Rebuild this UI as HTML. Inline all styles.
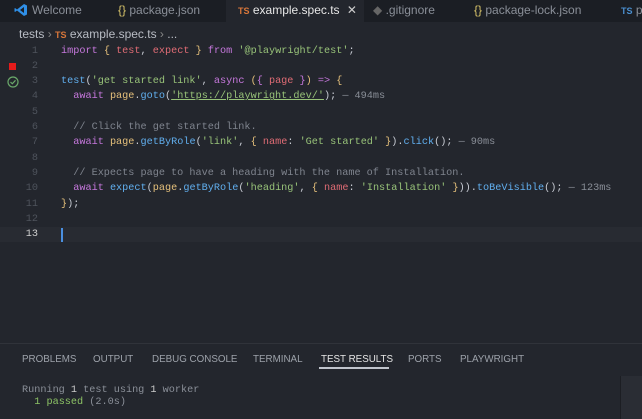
<!DOCTYPE html>
<html><head><style>
*{margin:0;padding:0;box-sizing:border-box}
body{width:642px;height:418px;overflow:hidden;background:#23262d;font-family:"Liberation Sans",sans-serif;position:relative}
.tabs{position:absolute;left:0;top:0;width:642px;height:22px;background:#1b1e24}
.tab{position:absolute;top:0;height:22px;line-height:20px;font-size:12px;color:#8a8f98;white-space:nowrap}
.tab.active{background:#23262d;color:#e6e6e6}
.crumb{position:absolute;left:19px;top:27px;font-size:12px;color:#b8bcc4}
.code{position:absolute;left:0;top:43.5px;width:642px;font-family:"Liberation Mono",monospace;font-size:10.2px}
.ln{position:absolute;left:0;width:642px;height:15.3px;line-height:15.3px;white-space:pre}
.n{position:absolute;left:18px;width:20px;text-align:right;color:#4e535c}
.t{position:absolute;left:61px;color:#c8ccd4}
.k{color:#c678dd}.r{color:#e06c75}.s{color:#98c379}.f{color:#61afef}.y{color:#e5c07b}.c{color:#7f848e}.g{color:#8a8f98}.p{color:#d19a66}
.panel{position:absolute;left:0;top:343px;width:642px;height:75px;border-top:1px solid #30333a}
.pt{position:absolute;top:10px;font-size:9.8px;color:#9da2aa}
</style></head><body>
<div class="tabs">
 <div class="tab" style="left:10px"><svg width="14" height="14" viewBox="0 0 14 14" style="position:absolute;left:4px;top:3px"><path d="M10 1 L13 2.5 V11.5 L10 13 L3 7.5 L1 9 L0.5 8.5 V5.5 L1 5 L3 6.5 Z M10 4 L6 7 L10 10 Z" fill="#2f8fe6"/></svg><span style="position:absolute;left:22px">Welcome</span></div>
 <div class="tab" style="left:118px"><span style="color:#d7c36a">{}</span> package.json</div>
 <div class="tab active" style="left:226px;width:138px;padding-left:12px"><span style="color:#d9773a;font-size:9px;font-weight:bold">TS</span> example.spec.ts <span style="margin-left:4px;color:#ccc">✕</span></div>
 <div class="tab" style="left:373px"><span style="color:#666">◆</span> .gitignore</div>
 <div class="tab" style="left:474px"><span style="color:#d7c36a">{}</span> package-lock.json</div>
 <div class="tab" style="left:621px"><span style="color:#4a8fd0;font-size:9px;font-weight:bold">TS</span> p</div>
</div>
<div class="crumb">tests <span style="color:#888">›</span> <span style="color:#d9773a;font-size:9px;font-weight:bold">TS</span> example.spec.ts <span style="color:#888">›</span> ...</div>
<div class="code">
 <div class="ln" style="top:0"><span class="n">1</span><span class="t"><span class="k">import</span> <span class="y">{</span> <span class="r">test</span>, <span class="r">expect</span> <span class="y">}</span> <span class="k">from</span> <span class="s">'@playwright/test'</span>;</span></div>
 <div class="ln" style="top:15.3px"><div style="position:absolute;left:9px;top:4px;width:7px;height:7px;background:#e51b1b"></div><span class="n">2</span></div>
 <div class="ln" style="top:30.6px"><svg width="12" height="12" style="position:absolute;left:7px;top:2px"><circle cx="6" cy="6" r="5" fill="none" stroke="#6aa86a" stroke-width="1.2"/><path d="M3.5 6 L5.3 7.8 L8.5 4.3" fill="none" stroke="#6aa86a" stroke-width="1.2"/></svg><span class="n">3</span><span class="t"><span class="f">test</span>(<span class="s">'get started link'</span>, <span class="k">async</span> <span class="y">(</span><span class="k">{</span> <span class="r">page</span> <span class="k">}</span><span class="y">)</span> <span class="k">=&gt;</span> <span class="y">{</span></span></div>
 <div class="ln" style="top:45.9px"><span class="n">4</span><span class="t">  <span class="k">await</span> <span class="y">page</span>.<span class="f">goto</span>(<span class="s" style="text-decoration:underline">'https://playwright.dev/'</span>); <span class="g">— 494ms</span></span></div>
 <div class="ln" style="top:61.2px"><span class="n">5</span></div>
 <div class="ln" style="top:76.5px"><span class="n">6</span><span class="t">  <span class="c">// Click the get started link.</span></span></div>
 <div class="ln" style="top:91.8px"><span class="n">7</span><span class="t">  <span class="k">await</span> <span class="y">page</span>.<span class="f">getByRole</span>(<span class="s">'link'</span>, <span class="y">{</span> <span class="r">name</span>: <span class="s">'Get started'</span> <span class="y">}</span>).<span class="f">click</span>(); <span class="g">— 90ms</span></span></div>
 <div class="ln" style="top:107.1px"><span class="n">8</span></div>
 <div class="ln" style="top:122.4px"><span class="n">9</span><span class="t">  <span class="c">// Expects page to have a heading with the name of Installation.</span></span></div>
 <div class="ln" style="top:137.7px"><span class="n">10</span><span class="t">  <span class="k">await</span> <span class="f">expect</span>(<span class="y">page</span>.<span class="f">getByRole</span>(<span class="s">'heading'</span>, <span class="y">{</span> <span class="r">name</span>: <span class="s">'Installation'</span> <span class="y">}</span>)).<span class="f">toBeVisible</span>(); <span class="g">— 123ms</span></span></div>
 <div class="ln" style="top:153px"><span class="n">11</span><span class="t"><span class="y">}</span>);</span></div>
 <div class="ln" style="top:168.3px"><span class="n">12</span></div>
 <div class="ln" style="top:183.6px;background:#282b32"><span class="n" style="color:#d0d0d0">13</span><div style="position:absolute;left:61px;top:1px;width:2px;height:14px;background:#4a8fe0"></div></div>
</div>
<div class="panel">
 <div class="pt" style="left:22px">PROBLEMS</div>
 <div class="pt" style="left:93px">OUTPUT</div>
 <div class="pt" style="left:152px">DEBUG CONSOLE</div>
 <div class="pt" style="left:253px">TERMINAL</div>
 <div class="pt" style="left:321px;color:#e6e6e6">TEST RESULTS</div>
 <div style="position:absolute;left:319px;top:23px;width:70px;height:2px;background:#c0c4cc"></div>
 <div class="pt" style="left:408px">PORTS</div>
 <div class="pt" style="left:460px">PLAYWRIGHT</div>
 <div style="position:absolute;left:22px;top:41px;font-family:'Liberation Mono',monospace;font-size:10.2px;line-height:12px;color:#8a8f98;white-space:pre">Running <span style="color:#ccc">1</span> test using <span style="color:#ccc">1</span> worker
  <span style="color:#8cc265">1 passed</span> (2.0s)</div>
 <div style="position:absolute;left:620px;top:32px;width:22px;height:43px;background:#2a2d34;border-left:1px solid #1c1e23"></div>
</div>
</body></html>
